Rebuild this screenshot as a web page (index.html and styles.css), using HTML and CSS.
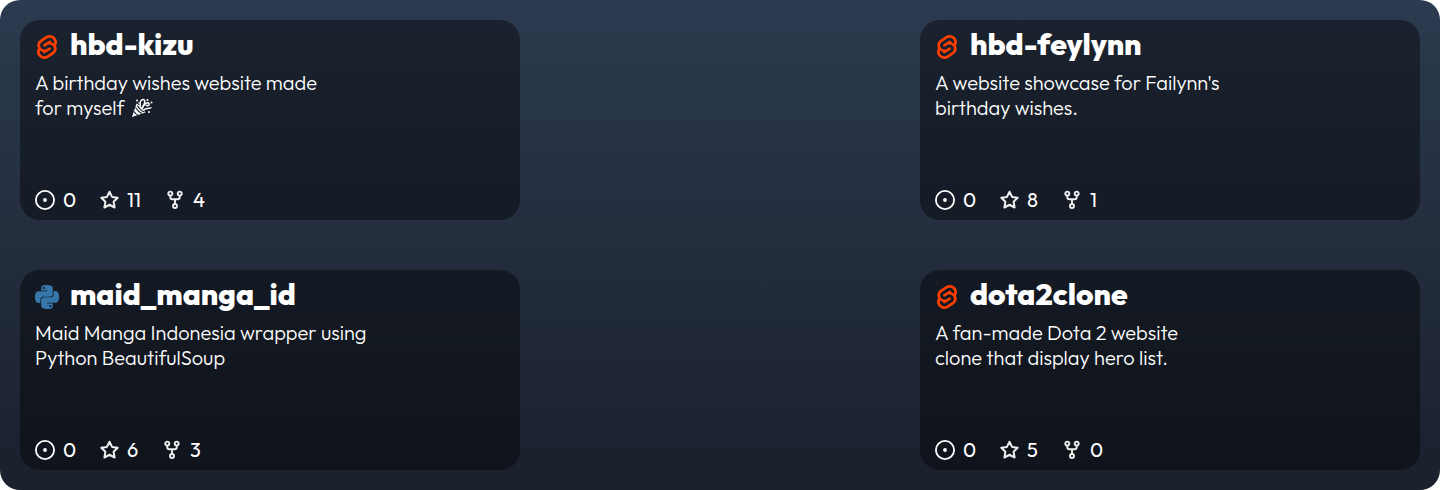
FILE: index.html
```html
<!DOCTYPE html>
<html lang="en">
<head>
<meta charset="utf-8">
<title>Repositories</title>
<link rel="stylesheet" href="styles.css">
</head>
<body>
<svg class="defs" width="0" height="0" aria-hidden="true">
  <symbol id="svelte" viewBox="0 0 24 24"><path fill="#ff3e00" d="M10.354 21.125a4.44 4.44 0 0 1-4.765-1.767 4.109 4.109 0 0 1-.703-3.107 3.898 3.898 0 0 1 .134-.522l.105-.321.287.21a7.21 7.21 0 0 0 2.186 1.092l.208.063-.02.208a1.253 1.253 0 0 0 .226.83 1.337 1.337 0 0 0 1.435.533 1.231 1.231 0 0 0 .343-.15l5.59-3.562a1.164 1.164 0 0 0 .524-.778 1.242 1.242 0 0 0-.211-.937 1.338 1.338 0 0 0-1.435-.533 1.23 1.23 0 0 0-.343.15l-2.133 1.36a4.078 4.078 0 0 1-1.135.499 4.44 4.44 0 0 1-4.765-1.766 4.108 4.108 0 0 1-.702-3.108 3.855 3.855 0 0 1 1.742-2.582l5.589-3.563a4.072 4.072 0 0 1 1.135-.499 4.44 4.44 0 0 1 4.765 1.767 4.109 4.109 0 0 1 .703 3.107 3.943 3.943 0 0 1-.134.522l-.105.321-.286-.21a7.204 7.204 0 0 0-2.187-1.093l-.208-.063.02-.207a1.255 1.255 0 0 0-.226-.831 1.337 1.337 0 0 0-1.435-.532 1.231 1.231 0 0 0-.343.15L8.62 9.368a1.162 1.162 0 0 0-.524.778 1.24 1.24 0 0 0 .211.937 1.338 1.338 0 0 0 1.435.533 1.235 1.235 0 0 0 .344-.151l2.132-1.36a4.067 4.067 0 0 1 1.135-.498 4.44 4.44 0 0 1 4.765 1.766 4.108 4.108 0 0 1 .702 3.108 3.857 3.857 0 0 1-1.742 2.583l-5.589 3.562a4.072 4.072 0 0 1-1.135.499m10.358-17.95C18.484-.015 14.082-.96 10.9 1.068L5.31 4.63a6.412 6.412 0 0 0-2.896 4.295 6.753 6.753 0 0 0 .666 4.336 6.43 6.43 0 0 0-.96 2.396 6.833 6.833 0 0 0 1.168 5.167c2.229 3.19 6.63 4.135 9.812 2.108l5.59-3.562a6.41 6.41 0 0 0 2.896-4.295 6.756 6.756 0 0 0-.665-4.336 6.429 6.429 0 0 0 .958-2.396 6.831 6.831 0 0 0-1.167-5.168Z"/></symbol>
  <symbol id="python" viewBox="0 0 24 24"><path fill="#3776ab" d="M14.25.18l.9.2.73.26.59.3.45.32.34.34.25.34.16.33.1.3.04.26.02.2-.01.13V8.5l-.05.63-.13.55-.21.46-.26.38-.3.31-.33.25-.35.19-.35.14-.33.1-.3.07-.26.04-.21.02H8.77l-.69.05-.59.14-.5.22-.41.27-.33.32-.27.35-.2.36-.15.37-.1.35-.07.32-.04.27-.02.21v3.06H3.17l-.21-.03-.28-.07-.32-.12-.35-.18-.36-.26-.36-.36-.35-.46-.32-.59-.28-.73-.21-.88-.14-1.05-.05-1.23.06-1.22.16-1.04.24-.87.32-.71.36-.57.4-.44.42-.33.42-.24.4-.16.36-.1.32-.05.24-.01h.16l.06.01h8.16v-.83H6.18l-.01-2.75-.02-.37.05-.34.11-.31.17-.28.25-.26.31-.23.38-.2.44-.18.51-.15.58-.12.64-.1.71-.06.77-.04.84-.02 1.27.05zm-6.3 1.98l-.23.33-.08.41.08.41.23.34.33.22.41.09.41-.09.33-.22.23-.34.08-.41-.08-.41-.23-.33-.33-.22-.41-.09-.41.09zm13.09 3.95l.28.06.32.12.35.18.36.27.36.35.35.47.32.59.28.73.21.88.14 1.04.05 1.23-.06 1.23-.16 1.04-.24.86-.32.71-.36.57-.4.45-.42.33-.42.24-.4.16-.36.09-.32.05-.24.02-.16-.01h-8.22v.82h5.84l.01 2.76.02.36-.05.34-.11.31-.17.29-.25.25-.31.24-.38.2-.44.17-.51.15-.58.13-.64.09-.71.07-.77.04-.84.01-1.27-.04-1.07-.14-.9-.2-.73-.25-.59-.3-.45-.33-.34-.34-.25-.34-.16-.33-.1-.3-.04-.25-.02-.2.01-.13v-5.34l.05-.64.13-.54.21-.46.26-.38.3-.32.33-.24.35-.2.35-.14.33-.1.3-.06.26-.04.21-.02.13-.01h5.84l.69-.05.59-.14.5-.21.41-.28.33-.32.27-.35.2-.36.15-.36.1-.35.07-.32.04-.28.02-.21V6.07h2.09l.14.01zm-6.47 14.25l-.23.33-.08.41.08.41.23.33.33.23.41.08.41-.08.33-.23.23-.33.08-.41-.08-.41-.23-.33-.33-.23-.41-.08-.41.08z"/></symbol>
  <symbol id="issue" viewBox="0 0 20 20"><circle cx="10" cy="10" r="9.1" fill="none" stroke="#fff" stroke-width="1.8"/><circle cx="10" cy="10" r="1.9" fill="#fff"/></symbol>
  <symbol id="star" viewBox="0 0 20 20"><path fill="none" stroke="#eee" stroke-width="2" stroke-linejoin="round" d="M10.500 1.700l2.550 5.200 5.650.8-4.100 4.050 1 5.750-5.100-2.750-5.100 2.750 1-5.750L2.300 7.700l5.650-.8z"/></symbol>
  <symbol id="fork" viewBox="0 0 20 20"><g fill="none" stroke="#eee" stroke-width="1.900"><circle cx="4.300" cy="3.600" r="2"/><circle cx="13.700" cy="3.600" r="2"/><circle cx="9" cy="16" r="2"/><path d="M4.300 5.600v1.700c0 1.200.8 2 2 2h5.400c1.200 0 2-.8 2-2V5.600M9 9.300v4.700"/></g></symbol>
  <symbol id="party" viewBox="0 0 22 20"><path fill="#fff" d="M5.500 5.500L1 19l13.500-4.500C12.500 10.500 9.500 7.500 5.500 5.500z"/><g fill="none" stroke="#18202a" stroke-width="1.200"><path d="M4.500 9.500c1.500 2.500 4 5 6.500 6M3 13.500c1.200 1.800 2.800 3.300 4.500 4M6.500 7.500c1.500 3 4 5.500 7 6.500"/></g><g fill="none" stroke="#fff" stroke-width="1.500"><path d="M9.500 8C8.500 5 9.500 1.500 12 1.500s2.300 4-.5 7.500M11.500 10c1.500-4.500 5.500-6.500 6.500-4.500s-2 3-3 1.500M13 12c2-3 4.500-.5 7.500-2.500"/></g><g fill="#fff"><circle cx="6" cy="2.500" r="1"/><circle cx="16.500" cy="2" r="1"/><circle cx="20.500" cy="4.500" r="1"/><circle cx="18" cy="14" r="1"/><circle cx="8" cy="5" r=".8"/></g></symbol>
</svg>
<main class="board">
  <article class="card">
    <header class="head"><svg class="lang"><use href="#svelte"/></svg><h2 class="title">hbd-kizu</h2></header>
    <p class="desc">A birthday wishes website made<br>for myself<svg class="party" role="img" aria-label="🎉"><use href="#party"/></svg></p>
    <footer class="stats"><span class="stat"><svg class="icon"><use href="#issue"/></svg>0</span><span class="stat wide"><svg class="icon"><use href="#star"/></svg>11</span><span class="stat forks"><svg class="icon"><use href="#fork"/></svg>4</span></footer>
  </article>
  <article class="card">
    <header class="head"><svg class="lang"><use href="#svelte"/></svg><h2 class="title">hbd-feylynn</h2></header>
    <p class="desc">A website showcase for Failynn's<br>birthday wishes.</p>
    <footer class="stats"><span class="stat"><svg class="icon"><use href="#issue"/></svg>0</span><span class="stat"><svg class="icon"><use href="#star"/></svg>8</span><span class="stat forks"><svg class="icon"><use href="#fork"/></svg>1</span></footer>
  </article>
  <article class="card">
    <header class="head"><svg class="lang"><use href="#python"/></svg><h2 class="title">maid_manga_id</h2></header>
    <p class="desc">Maid Manga Indonesia wrapper using<br>Python BeautifulSoup</p>
    <footer class="stats"><span class="stat"><svg class="icon"><use href="#issue"/></svg>0</span><span class="stat"><svg class="icon"><use href="#star"/></svg>6</span><span class="stat forks"><svg class="icon"><use href="#fork"/></svg>3</span></footer>
  </article>
  <article class="card">
    <header class="head"><svg class="lang"><use href="#svelte"/></svg><h2 class="title">dota2clone</h2></header>
    <p class="desc">A fan-made Dota 2 website<br>clone that display hero list.</p>
    <footer class="stats"><span class="stat"><svg class="icon"><use href="#issue"/></svg>0</span><span class="stat"><svg class="icon"><use href="#star"/></svg>5</span><span class="stat forks"><svg class="icon"><use href="#fork"/></svg>0</span></footer>
  </article>
</main>
</body>
</html>
```
FILE: styles.css
```css
* { box-sizing: border-box; }
body { margin: 0; background: #fff; color: #fff; font-family: Outfit, Lato, sans-serif; }
.defs { display: block; }
.board {
  display: grid;
  grid-template-columns: 500px 500px;
  grid-template-rows: 200px 200px;
  justify-content: space-between;
  row-gap: 50px;
  height: 490px;
  padding: 20px;
  border-radius: 20px;
  background: linear-gradient(#2c3a4f, #1a202c);
}
.card {
  display: flex;
  flex-direction: column;
  padding: 0 15px 8px;
  border-radius: 20px;
  background: rgba(0, 0, 0, 0.4);
}
.head { display: flex; gap: 11px; height: 50px; }
.lang { width: 24px; height: 24px; margin-top: 15px; }
.title { margin: 0; font-size: 30px; line-height: 48px; font-weight: 800; white-space: nowrap; }
.desc { margin: 0; font-size: 20px; line-height: 25px; font-weight: 300; white-space: nowrap; }
.party { width: 22px; height: 20px; margin-left: 7px; vertical-align: -3px; }
.stats { display: flex; height: 24px; margin-top: auto; font-size: 20px; line-height: 24px; font-weight: 400; }
.stat { display: flex; align-items: center; gap: 8px; width: 64px; }
.wide { width: 67px; }
.forks { gap: 7px; }
.icon { width: 20px; height: 20px; }
```
